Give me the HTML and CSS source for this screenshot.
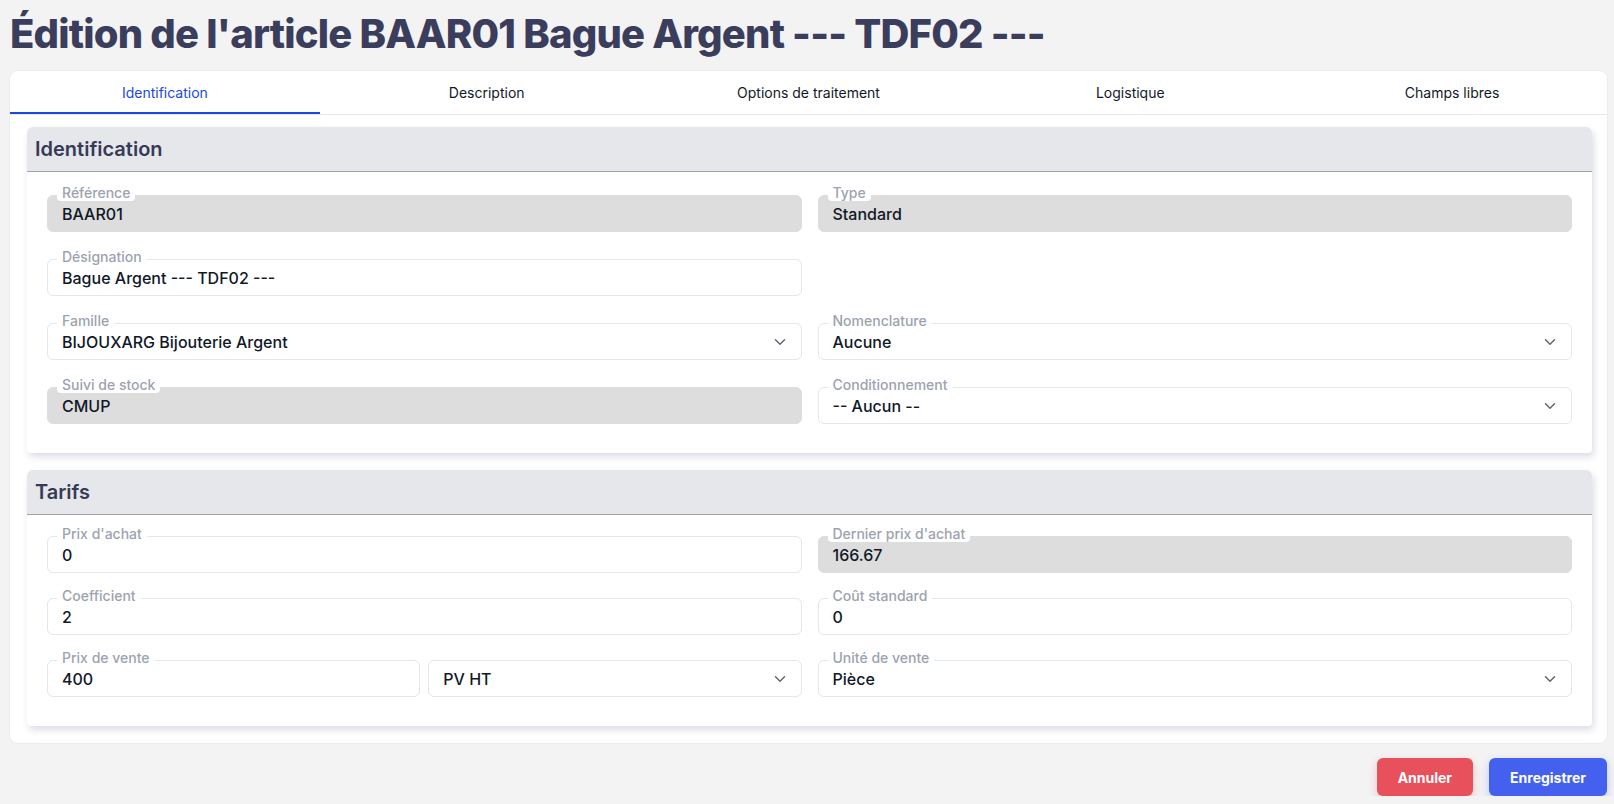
FILE: index.html
```html
<!DOCTYPE html>
<html lang="fr">
<head>
<meta charset="utf-8">
<title>Édition de l'article</title>
<link rel="stylesheet" href="styles.css">
</head>
<body>
<div class="page">
  <h1 class="title">Édition de l'article BAAR01 Bague Argent --- TDF02 ---</h1>
  <div class="card">
    <nav class="tabs">
      <div class="tab active">Identification</div>
      <div class="tab">Description</div>
      <div class="tab">Options de traitement</div>
      <div class="tab">Logistique</div>
      <div class="tab">Champs libres</div>
    </nav>
    <div class="card-body">
      <section class="panel">
        <div class="panel-head">Identification</div>
        <div class="panel-body panel-body-ident">
          <div class="field"><span class="label">Référence</span><div class="box disabled">BAAR01</div></div>
          <div class="field"><span class="label">Type</span><div class="box disabled">Standard</div></div>
          <div class="field"><span class="label">Désignation</span><div class="box">Bague Argent --- TDF02 ---</div></div>
          <div class="field empty"></div>
          <div class="field"><span class="label">Famille</span><div class="box select">BIJOUXARG Bijouterie Argent<svg class="chev" viewBox="0 0 12 8"><path d="M1.5 1.8 6 6.2l4.5-4.4"/></svg></div></div>
          <div class="field"><span class="label">Nomenclature</span><div class="box select">Aucune<svg class="chev" viewBox="0 0 12 8"><path d="M1.5 1.8 6 6.2l4.5-4.4"/></svg></div></div>
          <div class="field"><span class="label">Suivi de stock</span><div class="box disabled">CMUP</div></div>
          <div class="field"><span class="label">Conditionnement</span><div class="box select">-- Aucun --<svg class="chev" viewBox="0 0 12 8"><path d="M1.5 1.8 6 6.2l4.5-4.4"/></svg></div></div>
        </div>
      </section>
      <section class="panel">
        <div class="panel-head">Tarifs</div>
        <div class="panel-body panel-body-tarifs">
          <div class="field"><span class="label">Prix d'achat</span><div class="box">0</div></div>
          <div class="field"><span class="label">Dernier prix d'achat</span><div class="box disabled">166.67</div></div>
          <div class="field"><span class="label">Coefficient</span><div class="box">2</div></div>
          <div class="field"><span class="label">Coût standard</span><div class="box">0</div></div>
          <div class="field split">
            <span class="label">Prix de vente</span>
            <div class="box">400</div>
            <div class="box select">PV HT<svg class="chev" viewBox="0 0 12 8"><path d="M1.5 1.8 6 6.2l4.5-4.4"/></svg></div>
          </div>
          <div class="field"><span class="label">Unité de vente</span><div class="box select">Pièce<svg class="chev" viewBox="0 0 12 8"><path d="M1.5 1.8 6 6.2l4.5-4.4"/></svg></div></div>
        </div>
      </section>
    </div>
  </div>
  <div class="actions">
    <button class="btn btn-cancel">Annuler</button>
    <button class="btn btn-save">Enregistrer</button>
  </div>
</div>
</body>
</html>
```
FILE: styles.css
```css
* { box-sizing: border-box; }
html, body { margin: 0; padding: 0; }
body {
  background: #f3f3f4;
  font-family: Inter, "Noto Sans", "Liberation Sans", sans-serif;
  color: #111827;
}
.page {
  padding: 10px 7px 0 10px;
}
.title {
  margin: 0 0 13px 0;
  font-size: 40px;
  line-height: 48px;
  font-weight: 800;
  letter-spacing: -0.8px;
  color: #3a3d5b;
}
.card {
  background: #fff;
  border-radius: 8px;
  box-shadow: 0 0 0 1px #ececef;
}
.tabs {
  display: flex;
  gap: 12px;
  border-bottom: 1px solid #e5e7eb;
}
.tab {
  flex: 1 1 0;
  height: 43px;
  line-height: 43px;
  text-align: center;
  font-size: 14px;
  color: #111827;
}
.tab.active {
  color: #1d47e0;
  box-shadow: inset 0 -2px 0 #1d47e0;
}
.card-body {
  padding: 12px 15px 17px 17px;
  display: flex;
  flex-direction: column;
  gap: 17px;
}
.panel {
  background: #fff;
  border-radius: 6px 6px 4px 4px;
  box-shadow: 2px 4px 7px rgba(40, 52, 90, 0.16);
}
.panel-head {
  height: 45px;
  line-height: 45px;
  background: #e5e7eb;
  border-bottom: 1px solid #9ca3af;
  border-radius: 6px 6px 0 0;
  padding: 0 8px;
  font-size: 20px;
  font-weight: 600;
  color: #373a56;
}
.panel-body {
  display: grid;
  grid-template-columns: 1fr 1fr;
  column-gap: 16px;
  row-gap: 16px;
  padding: 13px 20px 29px 20px;
}
.panel-body-ident {
  row-gap: 17px;
  padding-top: 13px;
}
.panel-body-tarifs {
  row-gap: 15px;
  padding-top: 11px;
}
.field {
  position: relative;
  padding-top: 10px;
}
.field.split {
  display: grid;
  grid-template-columns: 1fr 1fr;
  column-gap: 8px;
}
.label {
  position: absolute;
  top: 0;
  left: 10px;
  padding: 0 5px;
  height: 16px;
  line-height: 16px;
  font-size: 14px;
  font-weight: 500;
  color: #9ca3af;
  background: #fff;
  border-radius: 4px;
  z-index: 1;
}
.box {
  position: relative;
  height: 37px;
  border: 1px solid #e2e6ee;
  border-radius: 6px;
  padding: 1px 40px 0 14px;
  display: flex;
  align-items: center;
  font-size: 16px;
  font-weight: 550;
  color: #111827;
  white-space: nowrap;
}
.box.disabled {
  background: #dddddd;
  border-color: #dddddd;
}
.chev {
  position: absolute;
  right: 15px;
  top: 50%;
  width: 12px;
  height: 8px;
  margin-top: -4px;
  fill: none;
  stroke: #5f6675;
  stroke-width: 1.5;
  stroke-linecap: round;
  stroke-linejoin: round;
}
.actions {
  display: flex;
  justify-content: flex-end;
  gap: 16px;
  padding-top: 15px;
}
.btn {
  height: 38px;
  border: none;
  border-radius: 6px;
  padding: 0 21px;
  font-family: Inter, "Noto Sans", sans-serif;
  font-size: 14px;
  font-weight: 700;
  color: #fff;
  cursor: pointer;
}
.btn-cancel {
  background: #e8505b;
  box-shadow: 0 4px 10px rgba(232, 80, 91, 0.3);
}
.btn-save {
  background: #4361ee;
  box-shadow: 0 4px 10px rgba(67, 97, 238, 0.3);
}
```
